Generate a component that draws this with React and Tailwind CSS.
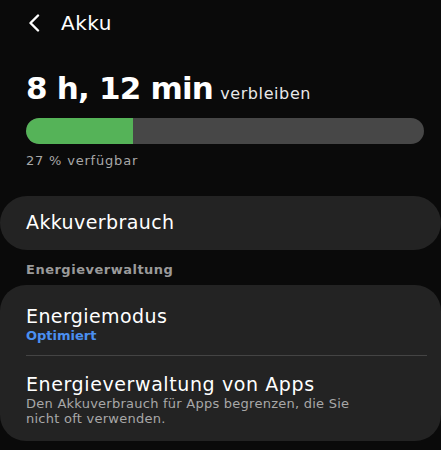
import React from 'react';

const font = { fontFamily: '"DejaVu Sans", "Liberation Sans", sans-serif' };

const App = () => {
  const percent = 27;

  return (
    <div className="w-[441px] h-[450px] overflow-hidden bg-[#0a0a0a] text-white" style={font}>
      <div className="flex items-center h-[46px] pl-[27px] gap-[20px]">
        <svg width="14" height="18" viewBox="0 0 14 18" fill="none">
          <path d="M11 1.5 L3.5 9 L11 16.5" stroke="#fff" strokeWidth="2.4" strokeLinecap="round" strokeLinejoin="round" />
        </svg>
        <h1 className="text-[20px] font-medium tracking-[0.5px]">Akku</h1>
      </div>

      <div className="px-[26px] pt-[24px]">
        <div className="flex items-baseline gap-[7px]">
          <span className="text-[31px] font-black leading-[36px] tracking-[-0.8px]">8 h, 12 min</span>
          <span className="text-[16px] text-[#e8e8e8] tracking-[0.6px]">verbleiben</span>
        </div>
        <div className="mt-[12px] h-[26px] w-[398px] rounded-full bg-[#474747] overflow-hidden">
          <div className="h-full bg-[#55b358] rounded-l-full" style={{ width: `${percent}%` }} />
        </div>
        <p className="mt-[7px] text-[13px] text-[#a8a8a8] tracking-[0.8px]">{percent} % verfügbar</p>
      </div>

      <div className="mt-[25px] h-[54px] rounded-[27px] bg-[#232323] flex items-center px-[26px]">
        <span className="text-[19px] font-medium tracking-[0.4px]">Akkuverbrauch</span>
      </div>

      <p className="mt-[10px] px-[26px] text-[13px] font-bold text-[#9a9a9a] tracking-[0.5px]">Energieverwaltung</p>

      <div className="mt-[6px] rounded-[26px] bg-[#232323] px-[26px]">
        <div className="pt-[19px] pb-[11px]">
          <p className="text-[19px] font-medium leading-[24px] tracking-[0.4px]">Energiemodus</p>
          <p className="text-[13px] font-bold leading-[16px] text-[#4a8ff0]">Optimiert</p>
        </div>
        <div className="h-px bg-[#444] -mr-[12px]" />
        <div className="pt-[16px] pb-[15px]">
          <p className="text-[19px] font-medium leading-[24px] tracking-[0.6px]">Energieverwaltung von Apps</p>
          <p className="w-[360px] text-[13px] leading-[15px] text-[#a8a8a8] tracking-[0.25px]">Den Akkuverbrauch für Apps begrenzen, die Sie nicht oft verwenden.</p>
        </div>
      </div>
    </div>
  );
};

export default App;
